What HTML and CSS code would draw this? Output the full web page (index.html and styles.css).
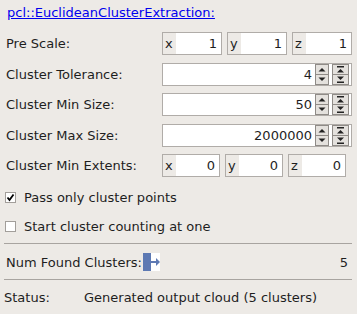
FILE: index.html
```html
<!DOCTYPE html>
<html lang="en">
<head>
	<meta charset="UTF-8">
	<title>Euclidean Cluster Extraction</title>
	<link rel="stylesheet" href="styles.css">
</head>
<body>
	<div class="panel">
		<div class="titleRow"><a class="title" href="#">pcl::EuclideanClusterExtraction:</a></div>

		<div class="form">
			<span class="label">Pre Scale:</span>
			<div class="vec">
				<div class="field"><span class="axis">x</span><span class="val">1</span></div>
				<div class="field"><span class="axis">y</span><span class="val">1</span></div>
				<div class="field"><span class="axis">z</span><span class="val">1</span></div>
			</div>

			<span class="label">Cluster Tolerance:</span>
			<div class="spin">
				<span class="val">4</span>
				<svg class="btns" width="36" height="21" viewBox="0 0 36 21">
					<use href="#spinButtons"/>
				</svg>
			</div>

			<span class="label">Cluster Min Size:</span>
			<div class="spin">
				<span class="val">50</span>
				<svg class="btns" width="36" height="21" viewBox="0 0 36 21">
					<use href="#spinButtons"/>
				</svg>
			</div>

			<span class="label">Cluster Max Size:</span>
			<div class="spin">
				<span class="val">2000000</span>
				<svg class="btns" width="36" height="21" viewBox="0 0 36 21">
					<use href="#spinButtons"/>
				</svg>
			</div>

			<span class="label">Cluster Min Extents:</span>
			<div class="vec narrow">
				<div class="field"><span class="axis">x</span><span class="val">0</span></div>
				<div class="field"><span class="axis">y</span><span class="val">0</span></div>
				<div class="field"><span class="axis">z</span><span class="val">0</span></div>
			</div>
		</div>

		<div class="check first">
			<span class="box">
				<svg width="9" height="9" viewBox="0 0 9 9"><path d="M1.5 4.5 L3.5 7 L7.5 1.5" fill="none" stroke="#000" stroke-width="1.8"/></svg>
			</span>Pass only cluster points
		</div>
		<div class="check"><span class="box"></span>Start cluster counting at one</div>

		<div class="sep"></div>

		<div class="result">
			<span>Num Found Clusters:</span>
			<svg class="outIcon" width="17" height="18" viewBox="0 0 17 18">
				<rect x="0" y="0" width="8" height="18" fill="#5d79b3"/>
				<rect x="8" y="0" width="9" height="18" fill="#ffffff"/>
				<rect x="8" y="8" width="6" height="2" fill="#5d79b3"/>
				<path d="M13 5 L17 9 L13 13 Z" fill="#5d79b3"/>
			</svg>
			<span class="count">5</span>
		</div>

		<div class="sep second"></div>

		<div class="status">
			<span class="statusLabel">Status:</span>
			<span>Generated output cloud (5 clusters)</span>
		</div>
	</div>

	<svg width="0" height="0" class="defs">
		<defs>
			<g id="spinButtons">
				<!-- single step -->
				<rect x="1.5" y="0.5" width="13" height="10" fill="#e4e1dd" stroke="#8f8b87"/>
				<rect x="1.5" y="10.5" width="13" height="10" fill="#e4e1dd" stroke="#8f8b87"/>
				<path d="M4.5 7.5 L8 4 L11.5 7.5 Z" fill="#222"/>
				<path d="M4.5 13.5 L8 17 L11.5 13.5 Z" fill="#222"/>
				<!-- page step -->
				<rect x="18.5" y="0.5" width="16" height="10" fill="#e4e1dd" stroke="#8f8b87"/>
				<rect x="18.5" y="10.5" width="16" height="10" fill="#e4e1dd" stroke="#8f8b87"/>
				<rect x="23" y="2" width="7" height="1.5" fill="#222"/>
				<path d="M23 8.5 L26.5 5 L30 8.5 Z" fill="#222"/>
				<path d="M23 12.5 L26.5 16 L30 12.5 Z" fill="#222"/>
				<rect x="23" y="17.5" width="7" height="1.5" fill="#222"/>
			</g>
		</defs>
	</svg>
</body>
</html>
```

FILE: styles.css
```css
html {
	background: #edeae6;
}
body,html {
	margin: 0;
	padding: 0;
	font-family: "DejaVu Sans", sans-serif;
	font-size: 13px;
	color: #1e1e1e;
}
.panel {
	width: 357px;
	height: 314px;
	box-sizing: border-box;
	padding: 4px 5px 0 4px;
}
.titleRow {
	height: 18px;
	line-height: 18px;
	padding-left: 3px;
}
.title {
	color: #0000ee;
	text-decoration: underline;
}
.form {
	display: grid;
	grid-template-columns: 158px 1fr;
	grid-auto-rows: 23px;
	row-gap: 7.5px;
	margin-top: 10px;
	align-items: center;
}
.label {
	padding-left: 2px;
}
.vec {
	display: flex;
	gap: 5px;
	height: 23px;
}
.vec .field {
	width: 60px;
}
.vec.narrow {
	width: 184px;
}
.vec.narrow .field {
	width: 58px;
}
.field {
	display: flex;
	box-sizing: border-box;
	height: 23px;
	border: 1px solid #b0aca8;
	background: #fff;
}
.axis {
	width: 11px;
	padding-left: 2px;
	background: #edeae6;
	line-height: 21px;
}
.field .val {
	flex: 1;
	text-align: right;
	padding-right: 4px;
	line-height: 21px;
}
.spin {
	display: flex;
	align-items: center;
	box-sizing: border-box;
	height: 23px;
	border: 1px solid #b0aca8;
	background: #fff;
}
.spin .val {
	flex: 1;
	text-align: right;
	padding-right: 2px;
	line-height: 21px;
}
.btns {
	display: block;
	margin-right: 1px;
}
.defs {
	position: absolute;
}
.check {
	display: flex;
	align-items: center;
	height: 18px;
	padding-left: 1px;
	margin-top: 11.5px;
}
.check.first {
	margin-top: 11px;
}
.box {
	box-sizing: border-box;
	width: 11px;
	height: 11px;
	border: 1px solid #a29e9a;
	background: #fff;
	margin-right: 8px;
}
.box svg {
	display: block;
}
.sep {
	height: 1px;
	background: #a8a4a0;
	margin-top: 7.5px;
}
.sep.second {
	margin-top: 8px;
}
.result {
	display: flex;
	align-items: center;
	height: 18px;
	margin-top: 9px;
	padding-left: 2px;
}
.outIcon {
	display: block;
	margin-left: 1px;
}
.count {
	margin-left: auto;
	margin-right: 4px;
}
.status {
	display: flex;
	align-items: center;
	height: 18px;
	margin-top: 8px;
}
.statusLabel {
	width: 80px;
}
```
